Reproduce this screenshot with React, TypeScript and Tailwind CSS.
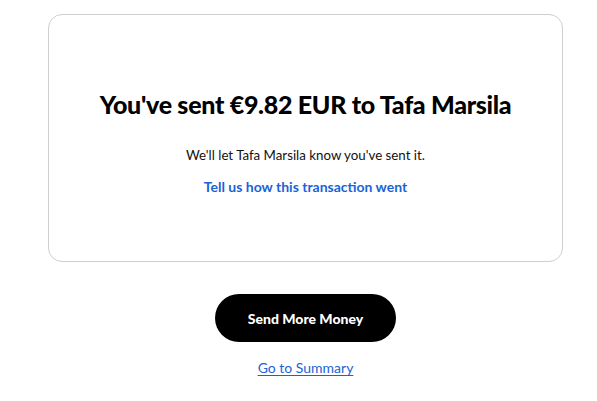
export default function App() {
  return (
    <div className="w-[597px] h-[401px] bg-white flex flex-col items-center pt-[14px] pl-[14px]" style={{ fontFamily: 'Lato, "Liberation Sans", sans-serif' }}>
      {/* Confirmation card */}
      <div className="w-[515px] h-[248px] border border-[#cfcfcf] rounded-[14px] flex flex-col items-center justify-center pt-[8px]">
        <h1 className="text-[25px] leading-[30px] font-black text-black tracking-[-0.3px]">
          You've sent €9.82 EUR to Tafa Marsila
        </h1>
        <p className="mt-[27px] text-[13.3px] leading-[18px] text-[#111]">
          We'll let Tafa Marsila know you've sent it.
        </p>
        <a href="#" className="mt-[14px] text-[14px] leading-[18px] font-bold text-[#1a63d6]">
          Tell us how this transaction went
        </a>
      </div>

      {/* Actions */}
      <button className="mt-[32px] w-[181px] h-[48px] rounded-full bg-black text-white text-[14px] font-black">
        Send More Money
      </button>
      <a href="#" className="mt-[17px] text-[14px] leading-[18px] text-[#1a63d6] underline underline-offset-2">
        Go to Summary
      </a>
    </div>
  );
}
